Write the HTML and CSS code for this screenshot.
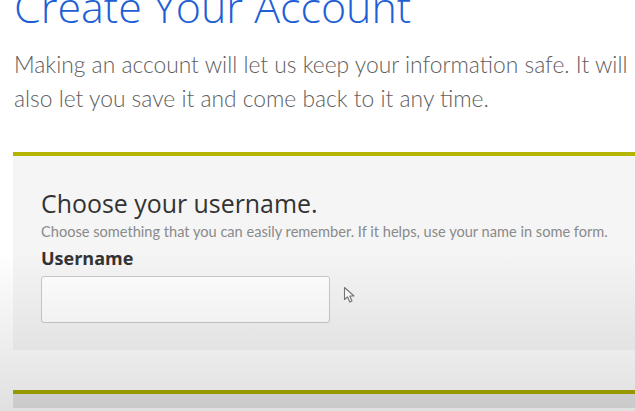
FILE: index.html
```html
<!DOCTYPE html>
<html>
<head>
<meta charset="utf-8">
<link rel="stylesheet" href="styles.css">
</head>
<body>
<div class="page">
  <h1 class="title">Create Your Account</h1>
  <p class="intro">Making an account will let us keep your information safe. It will also let you save it and come back to it any time.</p>
  <section class="panel">
    <h2 class="step">Choose your username.</h2>
    <p class="hint">Choose something that you can easily remember. If it helps, use your name in some form.</p>
    <label class="label" for="u">Username</label>
    <div class="field-row">
      <input class="input" id="u" type="text">
      <svg class="cursor" width="14" height="18" viewBox="0 0 14 18"><path d="M1.5 1.5 L1.5 13.5 L4.5 10.8 L6.8 16 L9 15 L6.8 10 L11 10 Z" fill="#fff" stroke="#777" stroke-width="1.1" stroke-linejoin="round"/></svg>
    </div>
  </section>
  <div class="next-bar"></div>
</div>
<div class="vignette"></div>
</body>
</html>
```
FILE: styles.css
```css
html, body {
  margin: 0;
  padding: 0;
  background: #ffffff;
  overflow: hidden;
  height: 411px;
}
.page {
  padding-left: 13px;
  font-family: Lato, "Open Sans", sans-serif;
}
.title {
  margin: -23px 0 0 1px;
  font-family: "Open Sans", sans-serif;
  font-weight: 300;
  font-size: 43px;
  line-height: 60px;
  color: #1f5fd6;
}
.intro {
  margin: 10px 0 0 1px;
  font-size: 22.8px;
  font-weight: 300;
  line-height: 34px;
  color: #5e5e5e;
  width: 621px;
}
.panel {
  margin-top: 37px;
  border-top: 4px solid #b3b500;
  background: #f5f5f5;
  padding: 32px 28px 25px;
  height: 137px;
}
.step {
  margin: 0;
  font-family: "Open Sans", sans-serif;
  font-weight: 400;
  font-size: 24.9px;
  line-height: 30px;
  color: #333;
}
.hint {
  margin: 5px 0 0;
  font-size: 14.6px;
  line-height: 18px;
  color: #8a8a8a;
  white-space: nowrap;
}
.label {
  display: block;
  margin-top: 6px;
  font-family: "Open Sans", sans-serif;
  font-weight: 700;
  font-size: 18px;
  line-height: 22px;
  color: #333;
}
.field-row {
  display: flex;
  align-items: flex-start;
  gap: 13px;
  margin-top: 7px;
}
.input {
  box-sizing: border-box;
  width: 289px;
  height: 47px;
  margin: 0;
  border: 1px solid #c9c9c9;
  border-radius: 3px;
  background: #fff;
}
.cursor {
  margin-top: 10px;
}
.next-bar {
  margin-top: 40px;
  border-top: 4px solid #a9aa00;
  height: 14px;
  background: #e6e6e6;
}
.vignette {
  position: absolute;
  left: 0;
  top: 0;
  width: 635px;
  height: 411px;
  pointer-events: none;
  background: linear-gradient(to bottom, rgba(0,0,0,0) 0px, rgba(0,0,0,0) 250px, rgba(0,0,0,0.06) 330px, rgba(0,0,0,0.12) 411px);
}
```
